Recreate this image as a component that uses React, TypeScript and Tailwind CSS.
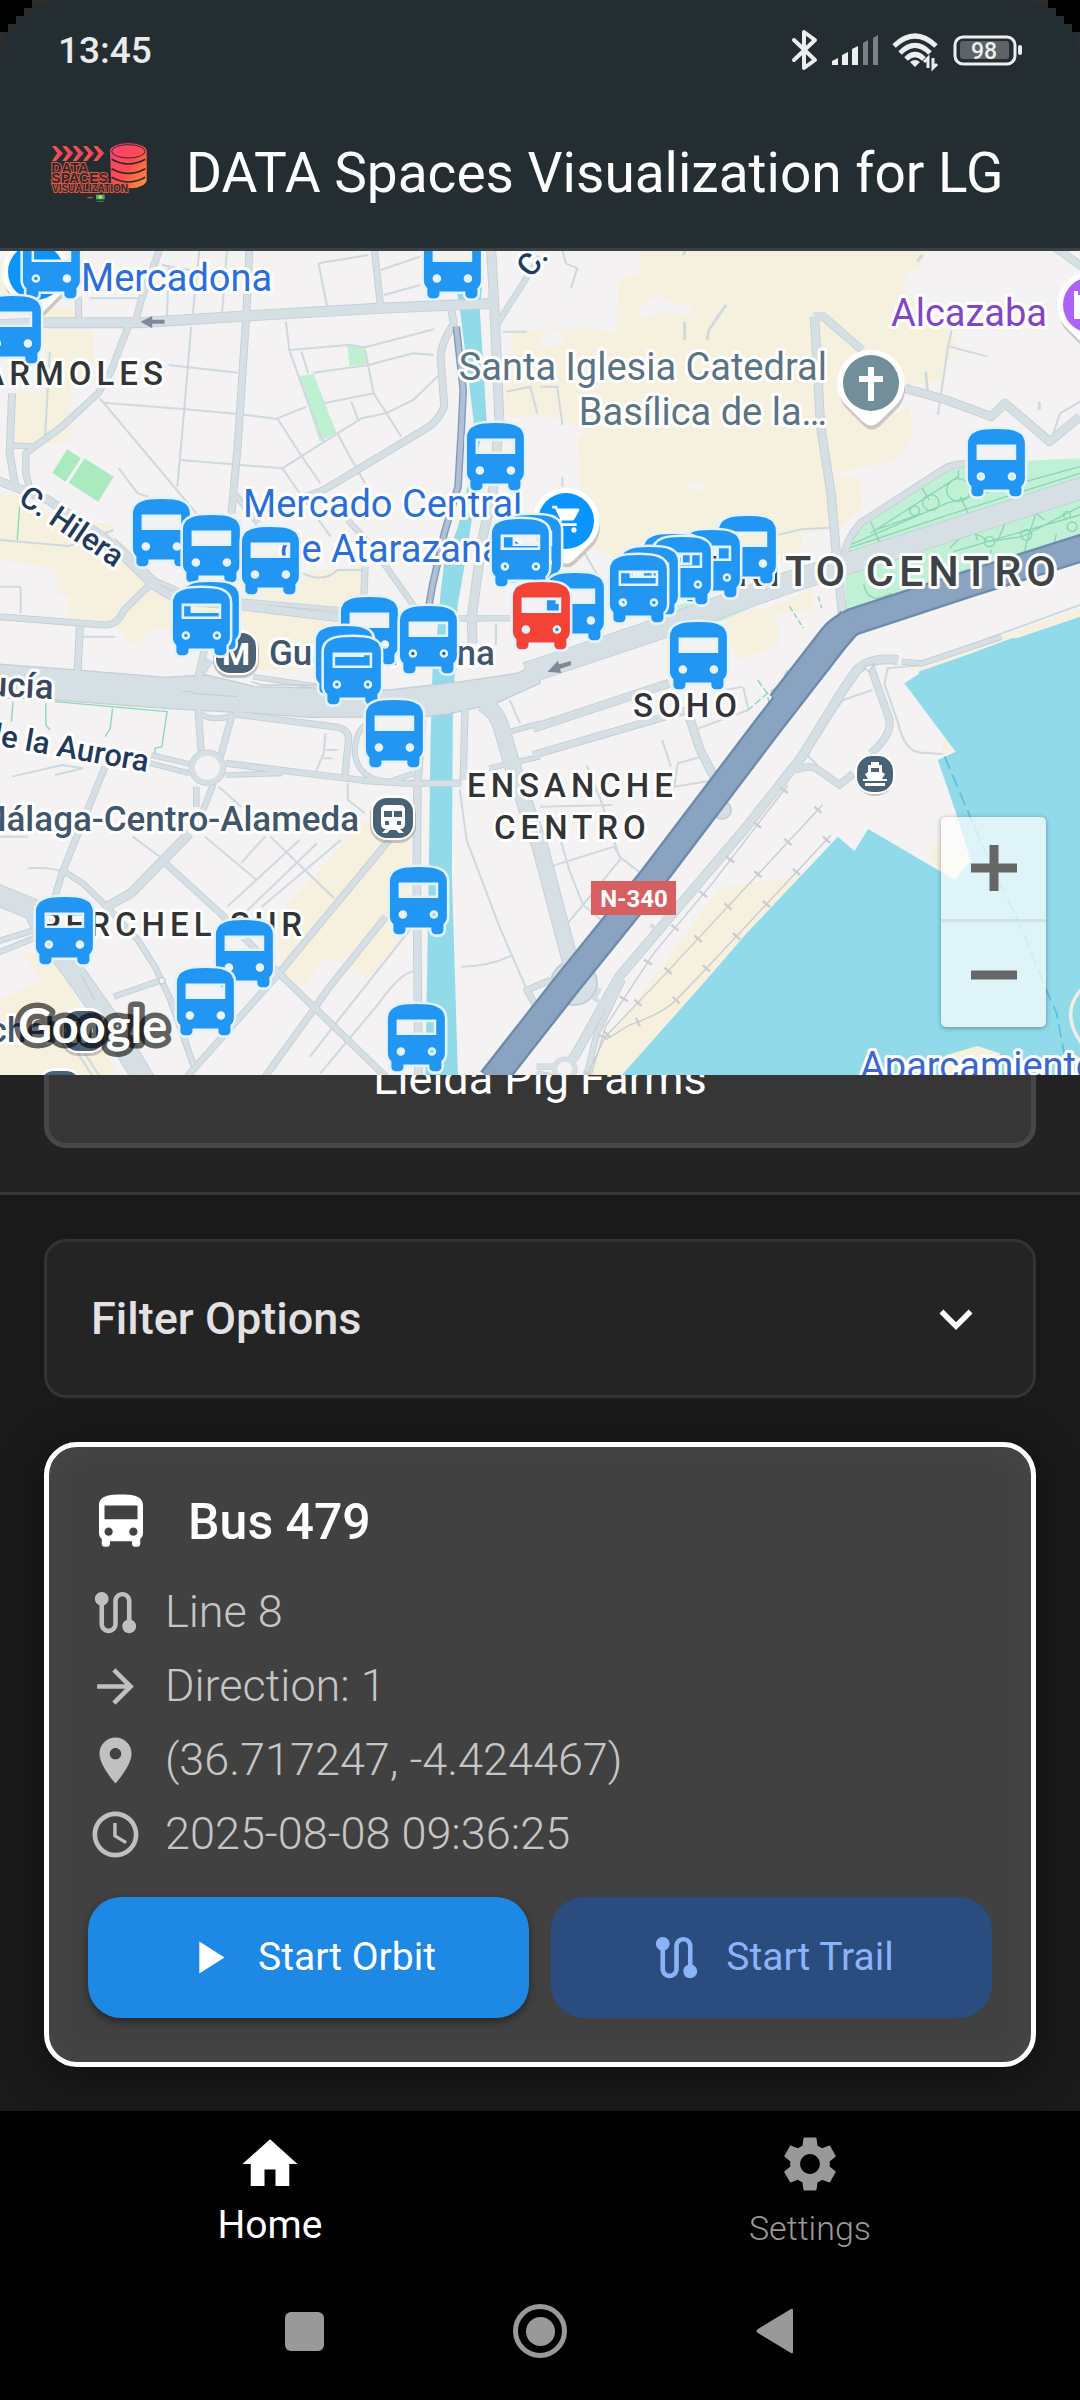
import { useState, type ReactNode } from "react";

const BUS =
  "M4 16c0 .88.39 1.67 1 2.22V20c0 .55.45 1 1 1h1c.55 0 1-.45 1-1v-1h8v1c0 .55.45 1 1 1h1c.55 0 1-.45 1-1v-1.78c.61-.55 1-1.34 1-2.22V6c0-3.5-3.58-4-8-4s-8 .5-8 4v10zm3.5 1c-.83 0-1.5-.67-1.5-1.5S6.67 14 7.5 14s1.5.67 1.5 1.5S8.33 17 7.5 17zm9 0c-.83 0-1.5-.67-1.5-1.5s.67-1.5 1.5-1.5 1.5.67 1.5 1.5-.67 1.5-1.5 1.5zm1.5-6H6V6h12v5z";
const ROUTE =
  "M19 15.18V7c0-2.21-1.79-4-4-4s-4 1.79-4 4v10c0 1.1-.9 2-2 2s-2-.9-2-2V8.82C8.16 8.4 9 7.3 9 6c0-1.66-1.34-3-3-3S3 4.34 3 6c0 1.3.84 2.4 2 2.82V17c0 2.21 1.79 4 4 4s4-1.79 4-4V7c0-1.1.9-2 2-2s2 .9 2 2v8.18A2.996 2.996 0 0 0 18 21c1.66 0 3-1.34 3-3 0-1.3-.84-2.4-2-2.82z";
const ARROW = "M12 4l-1.41 1.41L16.17 11H4v2h12.17l-5.58 5.59L12 20l8-8z";
const PLACE =
  "M12 2C8.13 2 5 5.13 5 9c0 5.25 7 13 7 13s7-7.75 7-13c0-3.87-3.13-7-7-7zm0 9.5c-1.38 0-2.5-1.12-2.5-2.5s1.12-2.5 2.5-2.5 2.5 1.12 2.5 2.5-1.12 2.5-2.5 2.5z";
const CLOCK =
  "M11.99 2C6.47 2 2 6.48 2 12s4.47 10 9.99 10C17.52 22 22 17.52 22 12S17.52 2 11.99 2zM12 20c-4.42 0-8-3.58-8-8s3.58-8 8-8 8 3.58 8 8-3.58 8-8 8zm.5-13H11v6l5.25 3.15.75-1.23-4.5-2.67z";
const PLAY = "M8 5v14l11-7z";
const CHEVRON = "M16.59 8.59L12 13.17 7.41 8.59 6 10l6 6 6-6z";
const HOME = "M10 20v-6h4v6h5v-8h3L12 3 2 12h3v8z";
const GEAR =
  "M19.14 12.94c.04-.3.06-.61.06-.94 0-.32-.02-.64-.07-.94l2.03-1.58c.18-.14.23-.41.12-.61l-1.92-3.32c-.12-.22-.37-.29-.59-.22l-2.39.96c-.5-.38-1.03-.7-1.62-.94l-.36-2.54c-.04-.24-.24-.41-.48-.41h-3.84c-.24 0-.43.17-.47.41l-.36 2.54c-.59.24-1.13.57-1.62.94l-2.39-.96c-.22-.08-.47 0-.59.22L2.74 8.87c-.12.21-.08.47.12.61l2.03 1.58c-.05.3-.09.63-.09.94s.02.64.07.94l-2.03 1.58c-.18.14-.23.41-.12.61l1.92 3.32c.12.22.37.29.59.22l2.39-.96c.5.38 1.03.7 1.62.94l.36 2.54c.05.24.24.41.48.41h3.84c.24 0 .44-.17.47-.41l.36-2.54c.59-.24 1.13-.56 1.62-.94l2.39.96c.22.08.47 0 .59-.22l1.92-3.32c.12-.22.07-.47-.12-.61l-2.01-1.58zM12 15.6c-1.98 0-3.6-1.62-3.6-3.6s1.62-3.6 3.6-3.6 3.6 1.62 3.6 3.6-1.62 3.6-3.6 3.6z";
const CART =
  "M7 18c-1.1 0-1.99.9-1.99 2S5.9 22 7 22s2-.9 2-2-.9-2-2-2zM1 2v2h2l3.6 7.59-1.35 2.45c-.16.28-.25.61-.25.96 0 1.1.9 2 2 2h12v-2H7.42c-.14 0-.25-.11-.25-.25l.03-.12.9-1.63h7.45c.75 0 1.41-.41 1.75-1.03l3.58-6.49A1.003 1.003 0 0 0 20 4H5.21l-.94-2H1zm16 16c-1.1 0-1.99.9-1.99 2s.89 2 1.99 2 2-.9 2-2-.9-2-2-2z";

function Icon({ d, className }: { d: string; className: string }) {
  return (
    <svg viewBox="0 0 24 24" fill="currentColor" aria-hidden="true" className={className}>
      <path d={d} />
    </svg>
  );
}

/* ---------- Map ---------- */

const NW = "translate(0 240) scale(.3444 .3333)";
const NE = "translate(540 240) scale(.3444 .3333)";
const SW = "translate(0 640) scale(.3444 .3333)";
const SE = "translate(540 640) scale(.3444 .3333)";

type Road = [tile: string, width: number, d: string];

const minorRoads: Road[] = [
  [NW, 6, "M580 20L560 220M660 20L645 215M490 80L485 230M925 70L950 200M925 70L1070 45M1105 90L1220 50M1115 165L1220 135M260 175H400M470 75L580 95M830 245L840 330L895 490L940 610M875 335L895 400M840 330L1010 315L1060 322L1260 268M910 398L1070 375L1200 340L1260 345M1060 330L1085 460L1165 590M940 490L1085 460M1275 405L1200 480L1120 520L1050 535L980 580L820 685M1020 485L1040 540M805 535L890 500M805 535L870 640L930 730M820 685L870 760L960 890M980 580L1005 630L1060 730M555 260L535 510L515 740M490 375L690 398M290 475L570 820M300 488L540 508L690 522L805 537M525 660L820 685M345 685L400 760L430 770M240 1190H335M60 1040V1120M0 1040H60M880 1000Q940 1030 980 990H1050M1440 1150V1215M1460 275H1530M1470 455L1540 440L1560 520M0 900L200 918L330 870M145 335L130 600"],
  [NE, 8, "M540 195L490 270L485 300M420 245V300M1110 45L1095 65M1120 395L1125 450M1450 485V510M428 20L415 45"],
  [NE, 6, "M65 30L75 70L108 85L90 145M1195 270L1185 320L1155 525M1190 320L1300 350M0 440H50L65 555M65 710V740M130 940L170 1010M690 885L760 868L840 863M1568 485L1510 520L1490 580M1080 1278L1568 1095"],
  [SW, 6, "M945 280L940 340L915 400M945 330H980M940 355H965M1010 430V480L1060 520M635 440L700 500M35 410L180 375L240 385L160 405M385 590L470 655M80 685Q160 680 190 700M595 590L745 720M785 590L970 775M770 590L725 640L700 670M870 600L660 800M920 610L700 830M990 600L760 800M1335 450L1355 600L1450 860L1530 1050M1340 980Q1420 980 1490 945M1190 870L975 1150L900 1250M1205 995Q1170 990 1100 1090L930 1300M1480 180L1510 250M0 590H80M470 1030L560 1290M220 1230L270 1310M240 1230L290 1310"],
  [SE, 6, "M590 140L605 210L460 265M585 140L540 150M355 300L380 380M135 375L180 490L230 650L300 705M0 500L210 495M30 680L215 620L235 655L125 795L190 850M60 600L85 690L125 795L80 850M470 350L400 370L390 440L510 420M390 440L330 460M1110 75L1010 85L1000 130L1040 250Q1060 340 1110 338L1170 342M965 150L880 180L800 290M770 340L805 375"],
];

const mainRoads: Road[] = [
  [NW, 28, "M-20 255L130 248L400 248L715 228L1100 205L1440 190"],
  [NW, 18, "M725 10L715 230L690 620L672 820"],
  [NW, 16, "M470 10L410 180L395 240M372 260L320 400L285 460L180 560L75 640L75 700L90 760M228 170V240M1085 10L1105 200"],
  [NW, 24, "M1425 10L1435 190L1450 540L1430 760L1400 900L1370 1130L1372 1210"],
  [NW, 18, "M1310 210L1318 250Q1275 320 1280 360L1290 500Q1270 550 1230 570L940 750L840 790"],
  [NW, 14, "M1568 50L1445 250M1320 1135H1480M1010 840L1080 920L1210 1110M680 760L750 850M20 615L100 620"],
  [NW, 22, "M-10 720L140 780L300 890L440 1030Q500 1080 560 1085L720 1100L1000 1135"],
  [NW, 10, "M330 900L450 1020L560 1070L1000 1110"],
  [NW, 16, "M0 1130L300 1155Q340 1160 360 1110L440 1030M1060 980L1055 1110"],
  [NW, 18, "M232 1160L222 1360M35 460L28 640L45 740M610 1260L575 1310"],
  [NE, 62, "M-40 1300L350 1165L700 1035L1000 935L1600 735"],
  [NE, 20, "M825 232L935 330M1480 10L1600 100M795 230H830"],
  [NE, 22, "M797 230L815 560L845 760L862 960L880 1140M1060 445L1180 480L1310 530L1350 490L1480 605L1568 530"],
  [NE, 18, "M885 940Q890 900 930 850L1170 690Q1200 670 1240 672"],
  [SW, 16, "M600 0L575 110M575 200L585 350M675 220L640 350M655 370L810 390L1060 422L1180 430H1340M680 222L980 262Q1015 270 1012 300L1000 420M1350 210L1345 420M305 380L180 700L160 770"],
  [SW, 12, "M575 215Q610 250 680 225M440 345L550 372M420 365L550 400M655 405L820 400M1070 250Q1030 270 1030 340Q1040 420 1130 425L1200 400M735 110L1060 160"],
  [SW, 14, "M570 440V500M620 430L590 510M180 690L240 730L310 800L400 900L450 980L500 1090L560 1270M330 1070L470 1020M-10 905L100 870M-10 940L110 890"],
  [SW, 24, "M550 580L470 665L380 760L310 800"],
  [SW, 20, "M1225 240L1212 430L1210 700L1215 1310"],
  [SW, 16, "M470 660L640 820L810 1000L1120 1310M1130 600L810 1000L560 1290L530 1330M1120 830L950 1050L910 1110L770 1310M1600 1020L1530 1050L1568 1120"],
  [SW, 60, "M-30 755L100 810L130 880L210 990L320 1150L430 1340"],
  [SW, 44, "M1400 190Q1440 210 1455 260L1500 420L1568 620L1660 980"],
  [SW, 12, "M1480 275L1568 250M1420 385L1568 350"],
  [SE, 22, "M-20 265L375 130M435 235L465 330L515 430"],
  [SE, 18, "M-20 345L430 210"],
  [SE, 24, "M1040 60Q960 50 920 90L880 150L760 350L600 560L230 1010L100 1250L60 1290"],
  [SE, 18, "M960 80L1015 240Q1020 290 960 340M740 390Q790 370 815 395L870 435L910 400"],
  [SE, 14, "M240 1020L165 1180L130 1330M-10 1280H60M-10 1300L40 1310M1050 65L1110 70L1340 -10"],
];

const BOULEVARD =
  "M-5 72L200 88L480 112L600 105L740 140L1130 150L1340 125L1500 100L1568 70V130L1440 190L1300 222L1230 230L900 232L740 220L480 205L160 180L-5 172Z";

const highway: Road[] = [
  [NE, 80, "M700 1390L850 1190Q870 1165 910 1145L1250 1030L1600 915"],
  [SE, 80, "M905 -60L855 0L660 260L330 710L80 1030L-30 1175L-140 1320"],
];

const rails: Road[] = [
  [SE, 4, "M820 495L370 995L190 1190L130 1320"],
  [SE, 4, "M845 585L470 1000L400 1075Q360 1120 260 1155L190 1200"],
  [SE, 4, "M720 435L500 730L330 940L190 1160L150 1300"],
];

const buses: [x: number, y: number][] = [
  [51, 231], [12, 296], [452, 231], [495, 423], [161, 499], [211, 515], [270, 527],
  [210, 582], [201, 588], [369, 597], [428, 606], [344, 626], [352, 637], [394, 700],
  [532, 515], [520, 519], [575, 573], [747, 516], [711, 530], [672, 534], [682, 537],
  [649, 547], [638, 555], [996, 429], [698, 622], [64, 897], [244, 920], [205, 968],
  [418, 867], [416, 1004],
];

function Roads({ list, color, extra = 0 }: { list: Road[]; color: string; extra?: number }) {
  return (
    <g fill="none" stroke={color} strokeLinejoin="round">
      {list.map(([tile, w, d]) => (
        <path key={tile + d} transform={tile} strokeWidth={w + extra} d={d} />
      ))}
    </g>
  );
}

function BusMarker({ x, y, color }: { x: number; y: number; color: string }) {
  return (
    <g transform={`translate(${x - 41} ${y - 6}) scale(3.45)`}>
      <path d={BUS} fill="none" stroke="#e3f2fd" strokeWidth="2" strokeLinejoin="round" />
      <path d={BUS} fill={color} fillRule="evenodd" stroke={color} strokeWidth=".5" />
    </g>
  );
}

function Pin({ x, y, color, children }: { x: number; y: number; color: string; children?: ReactNode }) {
  return (
    <g transform={`translate(${x} ${y})`}>
      <path d="M0-32a33 33 0 0 1 27 52L8 39q-8 7-16 0L-27 20A33 33 0 0 1 0-32z" fill="#777" opacity=".35" transform="translate(1 4)" />
      <path d="M0-33a33 33 0 0 1 27 53L8 39q-8 7-16 0L-27 20A33 33 0 0 1 0-33z" fill="#fff" />
      <circle r="28" fill={color} />
      {children}
    </g>
  );
}

function Station({ x, y, children }: { x: number; y: number; children: ReactNode }) {
  return (
    <g transform={`translate(${x} ${y})`}>
      <rect x="-23" y="-21" width="46" height="46" rx="17" fill="#777" opacity=".4" />
      <rect x="-22" y="-23" width="44" height="45" rx="16" fill="#fff" />
      <rect x="-20" y="-20" width="40" height="40" rx="14" fill="#4a6275" />
      {children}
    </g>
  );
}

const Metro = () => (
  <text y="12" textAnchor="middle" fontSize="32" fontWeight="700" fill="#fff">M</text>
);

function CityMap() {
  return (
    <svg
      viewBox="0 251 1080 824"
      preserveAspectRatio="xMidYMid slice"
      role="img"
      aria-label="Map of bus positions"
      className="block h-full w-full font-['Roboto',sans-serif]"
    >
      <rect y="240" width="1080" height="840" fill="#f4f2f3" />

      {/* commercial areas */}
      <g fill="#f6f0df">
        <path transform={NW} d="M130 270H272V430H205V610H45V455H130ZM0 60H60V200H0ZM120 200H215V240H120ZM0 760L60 770L200 850H330V900L390 930L500 1080L560 1090L720 1060L840 1000L1060 980V1100L1000 1130V1290H740L700 1130L440 1170L380 1215L340 1160L200 1140V1070L165 1060V985L0 960ZM1490 270H1568V530H1465V400L1490 390Z" />
        <path transform={NE} d="M290 20H1130L1100 80L1060 110L1060 160L1210 300L1165 420L1060 440L960 560L1070 500L1085 590L1040 660L850 700L930 720L935 800L870 870L760 880V930L640 1020L540 1050L300 1000L120 900L110 600L140 570L0 520V270L120 260L220 280L230 120L290 100ZM540 1130L700 1090L790 1050V1110L680 1120L700 1210L580 1260L545 1200ZM1060 1290L1568 1105V1290Z" />
        <path transform={SW} d="M1060 540L1190 600V880L1060 1020L1030 980L950 950L880 1040L820 1000L800 830L900 720ZM60 930L160 960L350 1320H0V1080L120 1020Z" />
        <path transform={SE} d="M520 745L760 705L470 1035L225 1320H110ZM1175 280L1207 335L1165 345Z" />
      </g>
      <path transform={NE} fill="#f4f2f3" d="M290 195L350 165L380 190L445 200L440 225L350 215L285 240ZM430 725L480 735L475 755L430 742ZM10 270L60 280L70 315L0 320Z" />

      {/* parks */}
      <path transform={NW} fill="#aaeabf" d="M195 628L235 655L190 725L152 698ZM245 655L330 710L285 785L200 728Z" />
      <path transform={NW} fill="#c0f0d2" d="M868 408L910 402L977 578L928 605ZM1008 310L1060 322L1068 372L1015 378Z" />
      <g transform={NE}>
        <path fill="#c0f0d6" d="M1215 672L1568 655V730L880 945L915 870L1170 690ZM885 980L1568 770V905L890 1135ZM400 1095L540 1065L620 1100L520 1145L400 1130Z" />
        <g fill="none" stroke="#8bd5b3" strokeWidth="4">
          <path d="M880 930L1200 820L1568 700M900 915L1180 790L1568 680M960 880L1215 710V690M975 870L1110 820M960 845L985 905M1110 745L1130 780M1220 770L1245 825M1190 925Q1250 850 1300 905L1400 890L1568 800M1200 935L1568 825M940 1030Q950 1100 1020 1060M1350 850L1330 900M1400 960L1415 900L1440 820L1465 840M1260 870L1270 900M1300 990L1310 930M1480 960L1500 880" />
          <circle cx="1215" cy="750" r="34" /><circle cx="1135" cy="788" r="24" /><circle cx="1088" cy="812" r="14" />
          <circle cx="1305" cy="905" r="15" /><circle cx="1412" cy="885" r="16" /><circle cx="1545" cy="860" r="14" /><circle cx="1530" cy="825" r="10" />
          <path strokeDasharray="16 8" d="M725 1100L765 1165M808 1070L818 1105" />
        </g>
      </g>
      <g fill="none" stroke="#8fd8b4" strokeWidth="4">
        <path transform={SW} d="M160 185L485 215L470 320L450 325V340M38 185L33 245M133 190V255L145 270M327 205L320 265L305 290" />
        <path transform={NW} d="M57 800L50 900" />
        <path transform={SE} strokeDasharray="22 8" d="M718 90Q700 140 660 160L605 210M632 120L660 160L668 210L645 250" />
      </g>

      {/* water */}
      <g fill="#90daea">
        <path transform={NW} d="M1325 140L1400 140L1393 205L1413 540L1385 640L1370 840L1345 1000L1328 1100L1325 1290H1260L1280 1050L1290 970L1330 860L1360 730L1375 540L1335 205Z" />
        <path transform={SW} d="M1258 20H1325L1315 200L1312 700L1330 1320H1235L1245 700L1250 300Z" />
        <path transform={NE} d="M1100 1295L1568 1130V1300H1100Z" />
        <path transform={SE} d="M1110 95L1370 -5H1568V1320H225L470 1035L600 880L865 590L913 633L953 567L1205 720L1250 660L1205 510L1155 360L1207 335L1058 130Z" />
      </g>
      <g transform={SE}>
        <path fill="#f6f0df" d="M1120 650L1165 600L1250 660L1205 720ZM1180 1245L1270 1218L1335 1240V1320H1180Z" />
        <path fill="none" stroke="#5cbfe0" strokeWidth="5" strokeDasharray="40 18" d="M1175 350L1290 630L1400 870L1470 1050L1500 1120L1522 1240" />
        <path fill="#90daea" stroke="#f1eee2" strokeWidth="10" d="M1590 1030Q1510 1100 1560 1190L1590 1240Z" />
      </g>

      {/* roads */}
      <Roads list={minorRoads} color="#ced9e0" />
      <ellipse cx="574" cy="983" rx="23" ry="22" fill="#d6e0e4" stroke="#c3ced7" strokeWidth="2" />
      <circle cx="722" cy="810" r="9" fill="#d6e0e4" stroke="#c3ced7" strokeWidth="2" />
      <Roads list={mainRoads} color="#c3ced7" extra={5} />
      <path transform={SW} d={BOULEVARD} fill="#d6e0e4" stroke="#c3ced7" strokeWidth="4" />
      <Roads list={mainRoads} color="#d6e0e4" />
      <g transform={SW} fill="none">
        <path d="M530 155H560M560 160L690 170M730 125L760 135H920M235 1005L275 1080" stroke="#c3ced7" strokeWidth="4" />
        <circle cx="602" cy="383" r="44" stroke="#c3ced7" strokeWidth="21" />
        <circle cx="602" cy="383" r="44" stroke="#d6e0e4" strokeWidth="16" fill="#f4f2f3" />
        <circle cx="470" cy="1022" r="9" stroke="#c3ced7" strokeWidth="4" fill="#f4f2f3" />
      </g>
      <g transform={SE}>
        <circle cx="72" cy="1287" r="30" fill="#f4f2f3" stroke="#d6e0e4" strokeWidth="16" />
        <path d="M940 80L970 72L955 95Z" fill="#f4f2f3" stroke="#c3ced7" strokeWidth="4" />
        <path d="M320 855L345 870M155 1075L180 1090M175 1045L155 1080" stroke="#d6e0e4" strokeWidth="12" />
      </g>
      <g transform={NW} fill="none">
        <path d="M1325 260L1345 450L1340 560L1330 740L1290 880L1255 1040L1240 1130" stroke="#8299ba" strokeWidth="22" />
        <path d="M1325 260L1345 450L1340 560L1330 740L1290 880L1255 1040L1240 1130" stroke="#b0c0d5" strokeWidth="14" />
      </g>
      <Roads list={rails} color="#cbccd0" />
      <g fill="none" stroke="#cbccd0" strokeWidth="28" strokeDasharray="7 123" strokeDashoffset="-16">
        {rails.map(([tile, , d]) => (
          <path key={d} transform={tile} d={d} />
        ))}
      </g>
      <Roads list={highway} color="#6c8cae" extra={4} />
      <Roads list={highway} color="#8aa3c1" extra={-10} />
      <g fill="#808a96">
        <path transform={NW} d="M408 245L442 228V239H478V251H442V265Z" />
        <path transform={SE} d="M22 95L52 62L55 73L90 63V76L58 87L62 99Z" />
      </g>

      {/* labels */}
      <g stroke="#fff" strokeWidth="6" strokeLinejoin="round" fontSize="38" style={{ paintOrder: "stroke" }}>
        <g fill="#2a6edb">
          <text x="81" y="291">Mercadona</text>
          <text x="243" y="517">Mercado Central</text>
          <text x="280" y="562">de Atarazanas</text>
          <text x="860" y="1079" fill="#3a68d2">Aparcamientos</text>
        </g>
        <text x="1047" y="326" textAnchor="end" fill="#8345c6">Alcazaba</text>
        <g fill="#5b747f" textAnchor="end">
          <text x="827" y="380">Santa Iglesia Catedral</text>
          <text x="827" y="425">Basílica de la…</text>
        </g>
        <g fill="#40566a" fontSize="35" fontWeight="500">
          <text x="269" y="665">Guadalmedina</text>
          <text x="359" y="831" textAnchor="end">Málaga-Centro-Alameda</text>
          <text x="54" y="1042" textAnchor="end">Perchel</text>
          <text x="53" y="699" textAnchor="end" transform="rotate(3 53 699)" fill="#3b485c">Andalucía</text>
        </g>
        <g fill="#1f3a5c" fontSize="31" fontWeight="500">
          <text transform="translate(17 502) rotate(34)">C. Hilera</text>
          <text transform="translate(531 279) rotate(-50)">C.</text>
          <text textAnchor="end" transform="translate(147 772) rotate(10)">de la Aurora</text>
        </g>
        <g fill="#333435" fontSize="33" fontWeight="500" letterSpacing="5">
          <text x="168" y="385" textAnchor="end">MARMOLES</text>
          <text x="633" y="717">SOHO</text>
          <text x="467" y="797">ENSANCHE</text>
          <text x="494" y="839">CENTRO</text>
          <text x="307" y="936" textAnchor="end">PERCHEL SUR</text>
        </g>
        <text x="1061" y="586" textAnchor="end" fill="#3e4346" fontSize="43" fontWeight="500" letterSpacing="5">DISTRITO CENTRO</text>
      </g>

      <rect x="591" y="881" width="85" height="34" fill="#d85f61" />
      <text x="634" y="907" textAnchor="middle" fontSize="24" fontWeight="700" fill="#fff">N-340</text>

      {/* places */}
      <Pin x={36} y={272} color="#0a94fd" />
      <Pin x={566} y={521} color="#0a94fd">
        <path d={CART} fill="#fff" transform="translate(-15 -18) scale(1.35)" />
      </Pin>
      <Pin x={871} y={383} color="#728e9b">
        <path d="M-3-16h6v9h9v6H3v19h-6V-1h-9v-6h9z" fill="#fff" />
      </Pin>
      <Pin x={1091} y={305} color="#ae63f8">
        <path d="M-17-14h4v4h4v-4h4v4h6v24h-18z" fill="#fff" />
      </Pin>
      <Station x={236} y={653}><Metro /></Station>
      <Station x={84} y={1031}><Metro /></Station>
      <Station x={60} y={1091}><Metro /></Station>
      <Station x={393} y={818}>
        <path fillRule="evenodd" fill="#fff" d="M-7-13h14q5 0 5 5v14q0 5-5 5l4 4H6l-3-3h-6l-3 3h-5l4-4q-5 0-5-5V-8q0-5 5-5zM-9-7v6h8v-6zM1-7v6h8v-6zM-8 3v4h4V3zM4 3v4h4V3z" />
      </Station>
      <g transform="translate(875 774)">
        <circle r="20" cy="2" fill="#777" opacity=".4" />
        <rect x="-20" y="-20" width="40" height="40" rx="17" fill="#fff" />
        <rect x="-18" y="-18" width="36" height="36" rx="15" fill="#4a6275" />
        <path fillRule="evenodd" fill="#fff" d="M-4-12h8v3h3v7l3 2-3 5h5v2h-24V5h5l-3-5 3-2v-7h3zM-4-6v4h8v-4zM-10 9h20v3h-20z" />
      </g>

      {buses.map(([x, y]) => (
        <BusMarker key={`${x}-${y}`} x={x} y={y} color="#2196f3" />
      ))}
      <BusMarker x={541} y={582} color="#f44336" />

      <g fontFamily="Lato, sans-serif" fontSize="47" fontWeight="700" strokeLinejoin="round">
        <text x="18" y="1043" fill="none" stroke="#000" strokeOpacity=".62" strokeWidth="11">Google</text>
        <text x="18" y="1043" fill="#fff">Google</text>
      </g>
    </svg>
  );
}

/* ---------- Status bar and header ---------- */

function ScreenCorner({ className }: { className: string }) {
  return (
    <svg viewBox="0 0 64 64" aria-hidden="true" className={className}>
      <path d="M0 0H60Q20 4 6 34Q1 45 0 60Z" fill="#2d2d2e" />
      <path d="M0 0H32V8H24V16H16V24H8V32H0Z" fill="#000" />
    </svg>
  );
}

function StatusIcons() {
  return (
    <svg viewBox="0 0 260 62" fill="none" stroke="#eceeef" className="h-[62px] w-[260px]" aria-label="Bluetooth, signal, Wi-Fi, battery" role="img">
      <path d="M14 20L35 40L24 48V12L35 20L14 40" strokeWidth="4" strokeLinecap="round" strokeLinejoin="round" />
      <g stroke="none" fill="#eceeef">
        <path d="M52 45V41L58 38V45Z M62 45V35L68 32V45Z M72 45V29L78 26V45Z" strokeLinejoin="round" />
        <path d="M83 45V23L88 20V45Z M93 45V18L98 15V45Z" fill="#7b8085" />
      </g>
      <g strokeWidth="5">
        <path d="M114 26Q135 6 156 26" />
        <path d="M120 33Q135 18 150 33" />
        <path d="M126 39Q135 30 144 39" />
      </g>
      <path d="M135 47L130 42Q135 38 140 42Z" fill="#eceeef" stroke="none" />
      <path d="M148 48V38L144 42M153 38V48L157 44" strokeWidth="3" />
      <rect x="175" y="17" width="60" height="27" rx="8" strokeWidth="3" />
      <rect x="180" y="21" width="49" height="18" rx="3" fill="#5d6368" stroke="none" />
      <rect x="238" y="25" width="4" height="10" rx="2" fill="#eceeef" stroke="none" />
      <text x="204" y="39" textAnchor="middle" fontSize="23" fontWeight="500" fill="#eceeef" stroke="none">98</text>
    </svg>
  );
}

function Logo() {
  return (
    <svg viewBox="0 0 420 300" className="h-[100px] w-[140px] shrink-0" role="img" aria-label="Data Spaces Visualization logo">
      <defs>
        <linearGradient id="warm" x1="0" y1="0" x2="1" y2="0">
          <stop offset="0" stopColor="#f2603a" />
          <stop offset="1" stopColor="#f03a6c" />
        </linearGradient>
        <linearGradient id="drum" x1="0" y1="0" x2="1" y2="1">
          <stop offset="0" stopColor="#fb3f70" />
          <stop offset=".5" stopColor="#ff4a52" />
          <stop offset="1" stopColor="#ff9a2e" />
        </linearGradient>
      </defs>
      <g fill="url(#warm)">
        {[66, 97, 128, 159, 190].map((x) => (
          <path key={x} d={`M${x} 78h12l21 22l-21 23h-12l16-23z`} />
        ))}
      </g>
      <path d="M240 92a54 22 0 0 1 110 0v88a54 26 0 0 1-46 25l-60-8z" fill="url(#drum)" />
      <g fill="none" stroke="#232d32" strokeWidth="5">
        <ellipse cx="295" cy="94" rx="50" ry="20" strokeWidth="3" />
        <path d="M245 118q50 28 101 0M245 146q50 28 101 0M245 172q50 28 101 0" />
      </g>
      <g fill="#232d32" stroke="#e8543f" strokeWidth="6" fontFamily="Liberation Sans, sans-serif" fontWeight="700" style={{ paintOrder: "stroke" }}>
        <text x="64" y="158" fontSize="42">DATA</text>
        <text x="64" y="189" fontSize="42">SPACES</text>
        <text x="66" y="217" fontSize="30">VISUALIZATION</text>
      </g>
      <rect x="198" y="224" width="26" height="14" fill="#3bb273" />
      <rect x="206" y="226" width="10" height="10" fill="#f4c542" />
      <path d="M172 233h16" stroke="#c0504a" strokeWidth="4" />
      <path d="M200 244h22" stroke="#3f8a63" strokeWidth="3" />
    </svg>
  );
}

/* ---------- Content ---------- */

const details = [
  { icon: ROUTE, text: "Line 8" },
  { icon: ARROW, text: "Direction: 1" },
  { icon: PLACE, text: "(36.717247, -4.424467)" },
  { icon: CLOCK, text: "2025-08-08 09:36:25" },
];

function BusCard() {
  return (
    <article className="rounded-[33px] border-[5px] border-white bg-[#414141] px-[39px] pt-[34px] pb-[44px] shadow-[0_8px_44px_rgba(0,0,0,0.45),inset_0_0_40px_rgba(255,255,255,0.04)]">
      <header className="flex items-center gap-[34px] pt-[8px] pb-[20px]">
        <Icon d={BUS} className="size-[66px] text-white" />
        <h2 className="text-[50px] leading-[66px] font-medium text-white">Bus 479</h2>
      </header>
      <ul>
        {details.map(({ icon, text }) => (
          <li key={text} className="flex h-[74px] items-center gap-[22px] text-[45px] leading-[60px] font-light text-[#c6c6c6]">
            <Icon d={icon} className="size-[55px] shrink-0 text-[#c0c0c0]" />
            {text}
          </li>
        ))}
      </ul>
      <div className="mt-[26px] grid grid-cols-2 gap-[22px]">
        <button type="button" className="flex h-[121px] items-center justify-center gap-[22px] rounded-[33px] bg-[#1e88e5] text-[39px] text-white shadow-[0_4px_8px_rgba(0,0,0,0.4)]">
          <Icon d={PLAY} className="size-[55px]" />
          Start Orbit
        </button>
        <button type="button" className="flex h-[121px] items-center justify-center gap-[22px] rounded-[33px] bg-[#2a4c7e] text-[39px] text-[#8ab4f8]">
          <Icon d={ROUTE} className="size-[55px]" />
          Start Trail
        </button>
      </div>
    </article>
  );
}

export default function App() {
  const [open, setOpen] = useState(false);
  return (
    <div className="flex min-h-screen flex-col bg-[#1a1a1a] font-['Roboto',sans-serif]">
      <header className="relative border-b-[3px] border-[#3a4145] bg-[#232d32]">
        <ScreenCorner className="absolute top-0 left-0 size-16" />
        <ScreenCorner className="absolute top-0 right-0 size-16 -scale-x-100" />
        <div className="flex h-[102px] items-center justify-between pr-10 pl-[58px]">
          <time className="text-[37px] font-medium text-[#e8eaeb]">13:45</time>
          <StatusIcons />
        </div>
        <div className="flex h-[146px] items-start gap-[16px] pt-[18px] pl-[30px]">
          <Logo />
          <h1 className="text-[55px] leading-[106px] font-normal whitespace-nowrap text-white">DATA Spaces Visualization for LG</h1>
        </div>
      </header>

      <div className="relative z-10 aspect-[1080/824] w-full overflow-hidden">
        <CityMap />
        <div className="absolute right-[34px] bottom-[48px] flex w-[105px] flex-col divide-y-[3px] divide-[#c9dde3]/80 rounded-[5px] bg-white/70 shadow-[0_1px_5px_rgba(0,0,0,0.35)]">
          <button type="button" aria-label="Zoom in" className="flex h-[105px] items-center justify-center">
            <svg viewBox="0 0 46 46" className="size-[46px]" stroke="#666" strokeWidth="9"><path d="M23 0V46M0 23H46" /></svg>
          </button>
          <button type="button" aria-label="Zoom out" className="flex h-[105px] items-center justify-center">
            <svg viewBox="0 0 46 46" className="size-[46px]" stroke="#666" strokeWidth="9"><path d="M0 23H46" /></svg>
          </button>
        </div>
      </div>

      <main className="flex-1">
        <section className="-mt-[69px] border-b-[3px] border-[#363636] bg-[#232323] px-[44px] pb-[44px]">
          <button type="button" className="block w-full rounded-[22px] border-[5px] border-[#484848] bg-[#363636] pt-[38px] pb-[34px] text-[45px] leading-[60px] text-white">
            Lleida Pig Farms
          </button>
        </section>
        <section className="flex flex-col gap-[44px] p-[44px]">
          <button
            type="button"
            aria-expanded={open}
            onClick={() => setOpen(!open)}
            className="flex h-[159px] items-center justify-between rounded-[22px] border-[3px] border-[#343434] bg-[#242424] px-[44px] text-[45px] font-medium text-[#e3e1e4]"
          >
            Filter Options
            <Icon d={CHEVRON} className="size-[66px] text-white" />
          </button>
          <BusCard />
        </section>
      </main>

      <footer className="bg-black">
        <nav className="grid h-[150px] grid-cols-2" aria-label="Main">
          <a href="#home" aria-current="page" className="flex flex-col items-center pt-[20px] text-[39px] leading-[50px] text-white">
            <Icon d={HOME} className="size-[66px]" />
            <span className="pt-[3px]">Home</span>
          </a>
          <a href="#settings" className="flex flex-col items-center pt-[20px] text-[34px] leading-[50px] font-light text-[#999]">
            <Icon d={GEAR} className="size-[66px]" />
            <span className="pt-[6px]">Settings</span>
          </a>
        </nav>
        <div className="flex h-[140px] items-center justify-center gap-[182px]">
          <button type="button" aria-label="Recent apps" className="flex size-[54px] items-center justify-center">
            <span className="size-[39px] rounded-[6px] bg-[#999]" />
          </button>
          <button type="button" aria-label="Home screen" className="flex size-[54px] items-center justify-center rounded-full border-[5px] border-[#999]">
            <span className="size-[29px] rounded-full bg-[#999]" />
          </button>
          <button type="button" aria-label="Back" className="flex size-[54px] items-center justify-center">
            <svg viewBox="0 0 54 54" className="size-[54px]" fill="#999"><path d="M44 6v42q0 2-2 1L9 29q-3-2 0-4L42 5q2-1 2 1z" /></svg>
          </button>
        </div>
      </footer>
    </div>
  );
}
